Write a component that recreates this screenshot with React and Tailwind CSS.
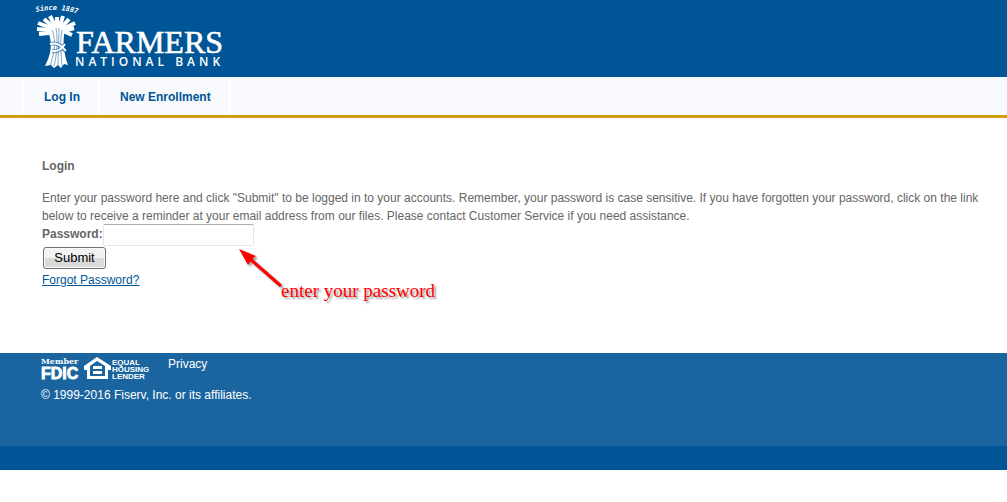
import { useState } from 'react'

const NAV_ITEMS = [
  { label: 'Log In', width: 'w-[76px]' },
  { label: 'New Enrollment', width: 'w-[133px]' },
]

// Wheat heads: start (neck) and end (tip) of each ear
const EARS = [
  [20, 33, 10, 34],
  [20, 30, 8, 29],
  [22, 28, 9, 23],
  [24, 27, 15, 19],
  [26, 26, 21, 16],
  [28, 26, 28, 17],
  [31, 26, 34, 16],
  [33, 27, 40, 19],
  [34, 29, 46, 23],
  [35, 31, 45, 28],
  [34, 31, 43, 35],
]

const STALK_GAPS = [
  'M23 30 C27 38 26 52 21 66',
  'M27 28 C29 40 28 54 25 66',
  'M30 28 C30 40 29 54 29 66',
  'M33 30 C31 40 32 54 33 66',
]

function WheatMark() {
  return (
    <g fill="none" stroke="#fff">
      {EARS.map(([x1, y1, x2, y2]) => (
        <path key={`${x2}-${y2}`} d={`M${x1} ${y1} L${x2} ${y2}`} strokeWidth="4" />
      ))}
      <path
        d="M19 27 L24 24 H33 L37 29 L35 35 C34 44 35 54 39 65 L35 64 L32 68 L29 65 L25 68 L22 65 L16 66 C21 56 24 46 20 34 Z"
        fill="#fff"
        stroke="none"
      />
      {STALK_GAPS.map(d => (
        <path key={d} d={d} stroke="#005596" strokeWidth="1" opacity="0.5" />
      ))}
      <path d="M22 44 C27 42 33 46 36 51 M23 51 C29 52 33 49 36 44" stroke="#005596" strokeWidth="4" opacity="0.6" />
      <path d="M21 44 C27 42 33 46 37 51 M22 51 C29 52 33 49 36 44" strokeWidth="2" />
    </g>
  )
}

function BankLogo() {
  return (
    <svg width="200" height="77" viewBox="0 0 200 77" role="img" aria-label="Farmers National Bank">
      <path id="since-arc" d="M7 12 Q28 7 50 14" fill="none" />
      <text fill="#fff" className="font-['DejaVu_Sans_Mono',monospace] text-[7px] font-bold italic">
        <textPath href="#since-arc">Since 1887</textPath>
      </text>
      <WheatMark />
      <text
        x="47"
        y="53"
        fill="#fff"
        stroke="#fff"
        strokeWidth="0.6"
        className="font-['Liberation_Serif',serif] text-[32px]"
      >
        FARMERS
      </text>
      <text x="46" y="66" fill="#fff" className="font-['Open_Sans',sans-serif] text-[12px] font-semibold tracking-[4px]">
        NATIONAL BANK
      </text>
    </svg>
  )
}

function Annotation() {
  return (
    <div className="pointer-events-none absolute left-[197px] top-[24px] h-[56px] w-[200px]">
      <svg width="52" height="46" viewBox="0 0 52 46" className="drop-shadow-[2px_2px_1px_rgba(0,0,0,0.4)]">
        <path d="M10 9 L42 37" stroke="#f00" strokeWidth="3" />
        <path d="M0 0 L17 7 L13 10 L9 16 Z" fill="#f00" />
      </svg>
      <span className="absolute left-[42px] top-[31px] whitespace-nowrap font-['Liberation_Serif',serif] text-[19px] leading-[22px] text-[#f00] [text-shadow:2px_2px_2px_rgba(0,0,0,0.4)]">
        enter your password
      </span>
    </div>
  )
}

function LenderBadges() {
  return (
    <svg width="108" height="25" viewBox="0 0 108 25" role="img" aria-label="Member FDIC, Equal Housing Lender" fill="#fff">
      <text x="0" y="7" className="font-['DejaVu_Serif',serif] text-[8px] font-bold">Member</text>
      <text x="0" y="22" stroke="#fff" strokeWidth="0.8" className="font-['Liberation_Sans',Arial,sans-serif] text-[16px] font-bold">FDIC</text>
      <path fillRule="evenodd" d="M56 0 L70 9 V13 H67 V22 H46 V13 H43 V9 Z M56 4 L49 9 V19 H64 V9 Z" />
      <path d="M52 9 H61 V12 H52 Z M52 14 H61 V17 H52 Z" />
      <g className="font-['Liberation_Sans',Arial,sans-serif] text-[8px] font-bold">
        <text x="71" y="8">EQUAL</text>
        <text x="71" y="15">HOUSING</text>
        <text x="71" y="22">LENDER</text>
      </g>
    </svg>
  )
}

export default function App() {
  const [password, setPassword] = useState('')

  return (
    <div className="bg-white font-['Liberation_Sans',Arial,sans-serif] text-xs leading-[18px] text-[#666]">
      <header className="bg-[#005596] pl-[29px]">
        <div className="flex h-[77px]">
          <BankLogo />
        </div>
      </header>

      <nav className="flex border-b-3 border-[#d29f13] bg-[#f7f9fc] pl-[22px]">
        {NAV_ITEMS.map(({ label, width }) => (
          <a
            key={label}
            href="#"
            className={`${width} whitespace-nowrap border-l-2 border-white pb-[9px] pl-5 pt-[11px] font-bold text-[#005596] last:border-r-2`}
          >
            {label}
          </a>
        ))}
      </nav>

      <main className="pb-[64px] pl-[42px] pr-2 pt-[39px]">
        <h1 className="mb-[14px] font-bold">Login</h1>
        <p>
          Enter your password here and click "Submit" to be logged in to your accounts. Remember, your password is case
          sensitive. If you have forgotten your password, click on the link below to receive a reminder at your email
          address from our files. Please contact Customer Service if you need assistance.
        </p>
        <form className="relative" onSubmit={e => e.preventDefault()}>
          <div className="flex h-[21px] items-start">
            <label htmlFor="password" className="font-bold">Password:</label>
            <input
              id="password"
              type="password"
              value={password}
              onChange={e => setPassword(e.target.value)}
              className="-mt-px h-[22px] w-[151px] rounded-xs border border-[#e3e6ee] border-t-[#abadb3] px-1 outline-none"
            />
          </div>
          <button
            type="submit"
            className="mx-px mt-px block h-[22px] w-[63px] rounded-[3px] border border-[#707070] bg-linear-to-b from-[#f2f2f2] from-50% to-[#dadada] to-50% text-[13px] leading-5 text-black shadow-[inset_0_0_0_1px_#fafafa]"
          >
            Submit
          </button>
          <a href="#" className="mt-[2px] inline-block text-[#005596] underline">Forgot Password?</a>
          <Annotation />
        </form>
      </main>

      <footer className="border-b-24 border-[#005596] bg-[#1a659f] pb-[42px] pl-[41px] pt-1 text-white">
        <div className="flex gap-[19px]">
          <LenderBadges />
          <a href="#" className="-mt-px self-start leading-4">Privacy</a>
        </div>
        <p className="mt-1">© 1999-2016 Fiserv, Inc. or its affiliates.</p>
      </footer>
    </div>
  )
}
